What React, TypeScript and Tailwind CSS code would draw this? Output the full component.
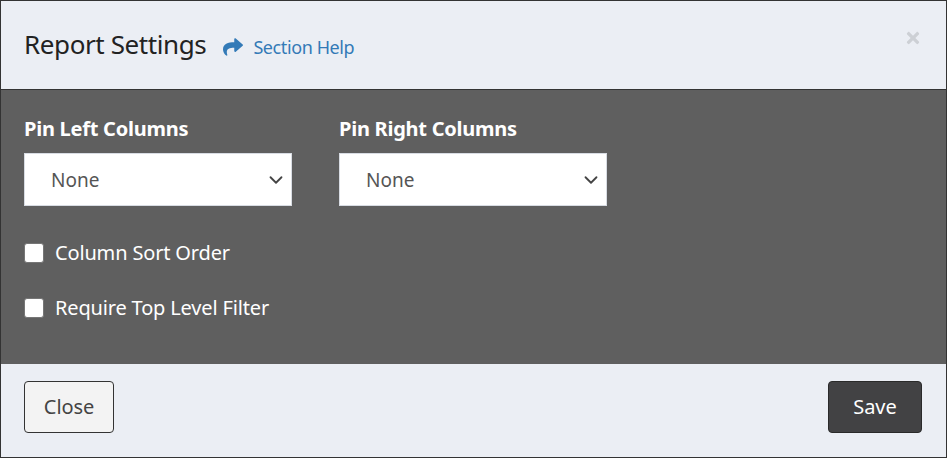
import { FaShare, FaTimes } from 'react-icons/fa';
import { LuChevronDown } from 'react-icons/lu';

const PinSelect = ({ label }: { label: string }) => (
  <div className="w-[268px]">
    <div className="h-[26px] text-[20px] leading-[26px] font-bold text-white tracking-[-0.25px]">{label}</div>
    <div className="mt-[11px] h-[53px] bg-white border border-[#d8dce3] flex items-center justify-between pl-[26px] pr-[4px]">
      <span className="text-[19px] mt-[1px] text-[#555555]">None</span>
      <LuChevronDown size={22} strokeWidth={2} className="text-[#444444]" />
    </div>
  </div>
);

const CheckRow = ({ label }: { label: string }) => (
  <label className="flex items-center h-[26px] gap-[11px]">
    <span className="w-[20px] h-[20px] bg-white rounded-[3px] border border-[#767676]" />
    <span className="text-[20px] leading-[26px] text-white tracking-[-0.16px]">{label}</span>
  </label>
);

export default function App() {
  return (
    <div className="w-[947px] h-[458px] border border-[#333333] flex flex-col font-['Noto_Sans',sans-serif] bg-[#ebeef4]">
      <div className="h-[89px] shrink-0 border-b border-[#333333] flex items-start justify-between pl-[23px] pr-[24px]">
        <div className="flex items-center h-[88px]">
          <h4 className="text-[26px] text-[#222222] tracking-[-0.4px] mb-[2px]">Report Settings</h4>
          <FaShare size={20} className="ml-[17px] mt-[3px] text-[#337ab7]" />
          <span className="ml-[10px] mt-[4px] text-[18px] text-[#337ab7] tracking-[-0.4px]">Section Help</span>
        </div>
        <FaTimes size={18} className="mt-[28px] text-[#cdd0d5]" />
      </div>
      <div className="h-[274px] shrink-0 bg-[#5f5f5f] px-[23px] pt-[26px]">
        <div className="flex gap-[47px]">
          <PinSelect label="Pin Left Columns" />
          <PinSelect label="Pin Right Columns" />
        </div>
        <div className="mt-[34px] flex flex-col gap-[29px]">
          <CheckRow label="Column Sort Order" />
          <CheckRow label="Require Top Level Filter" />
        </div>
      </div>
      <div className="flex-1 flex items-start justify-between pl-[23px] pr-[24px] pt-[17px]">
        <button className="w-[90px] h-[52px] bg-[#f3f3f3] border border-[#333333] rounded-[4px] text-[20px] text-[#444444] tracking-[-0.1px]">Close</button>
        <button className="w-[94px] h-[52px] bg-[#424244] border border-[#2a2a2a] rounded-[4px] text-[20px] text-white">Save</button>
      </div>
    </div>
  );
}
